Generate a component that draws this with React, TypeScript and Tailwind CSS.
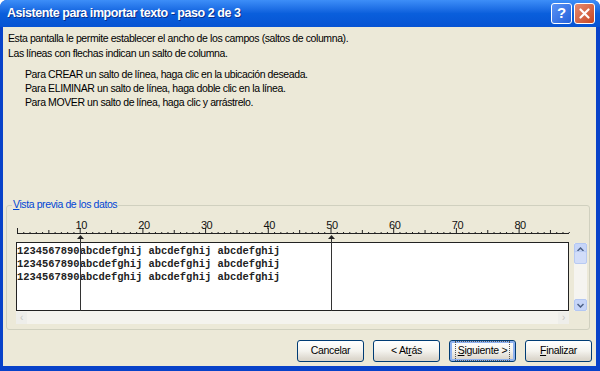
import React from "react";

const CH = 6.27;
const rows = [
  "1234567890abcdefghij abcdefghij abcdefghij",
  "1234567890abcdefghij abcdefghij abcdefghij",
  "1234567890abcdefghij abcdefghij abcdefghij",
];
const breaks = [10, 50];

const Ruler: React.FC = () => {
  const ticks = [];
  for (let n = 0; n <= 88; n++) {
    const x = 1.5 + n * CH;
    const h = n % 10 === 0 ? 5 : n % 5 === 0 ? 3 : 1;
    ticks.push(<line key={n} x1={x} x2={x} y1={15 - h} y2={15} stroke="#222" strokeWidth={1} />);
  }
  return (
    <svg width={556} height={24} className="block">
      <line x1={1} x2={553} y1={15.5} y2={15.5} stroke="#222" strokeWidth={1} />
      {ticks}
      {[10, 20, 30, 40, 50, 60, 70, 80].map((n) => (
        <text
          key={n}
          x={1.5 + n * CH + 1}
          y={11}
          textAnchor="middle"
          fontSize={11}
          fontFamily="'Liberation Sans', Arial, sans-serif"
          fill="#111"
        >
          {n}
        </text>
      ))}
    </svg>
  );
};

const XpButton: React.FC<{ children: React.ReactNode; def?: boolean }> = ({ children, def }) => (
  <div
    className={`w-[67px] h-[22px] rounded-[3px] border border-[#003c74] bg-gradient-to-b from-[#ffffff] via-[#f4f3ee] to-[#d6d0c5] flex items-center justify-center text-[10.5px] tracking-[-0.3px] text-black ${
      def ? "shadow-[inset_0_0_0_2px_#8fb2ef]" : "shadow-[inset_0_-2px_0_#dcd7cc]"
    }`}
  >
    <span className={def ? "outline outline-1 outline-dotted outline-[#555] outline-offset-1 px-[1px]" : ""}>
      {children}
    </span>
  </div>
);

const App: React.FC = () => {
  return (
    <div className="w-[600px] h-[371px] bg-white font-['Liberation_Sans',Arial,sans-serif]">
      <div className="w-[600px] h-[371px] rounded-t-[7px] bg-[#0842c9] flex flex-col overflow-hidden">
        {/* title bar */}
        <div className="h-[27px] flex items-center justify-between pl-[7px] pr-[5px] bg-gradient-to-b from-[#3d8ef8] via-[#0a5fdc] to-[#0653d3]">
          <span className="text-white font-bold text-[12.5px] tracking-[-0.45px] [text-shadow:1px_1px_0_#0a2f8a]">
            Asistente para importar texto - paso 2 de 3
          </span>
          <div className="flex gap-[2px] items-center">
            <div className="w-[21px] h-[21px] rounded-[3px] border border-white bg-gradient-to-br from-[#5b93f5] to-[#2360da] flex items-center justify-center text-white font-bold text-[15px]">
              ?
            </div>
            <div className="w-[21px] h-[21px] rounded-[3px] border border-white bg-gradient-to-br from-[#e58a70] to-[#c7461f] flex items-center justify-center">
              <svg width="11" height="11" viewBox="0 0 11 11">
                <path d="M1.5 1.5 L9.5 9.5 M9.5 1.5 L1.5 9.5" stroke="white" strokeWidth="2.2" strokeLinecap="round" />
              </svg>
            </div>
          </div>
        </div>

        {/* client area */}
        <div className="flex-1 ml-[3px] mr-[4px] mb-[5px] bg-[#ece9d8] flex flex-col text-[10.5px] tracking-[-0.4px] text-black">
          <div className="pt-[4px] pl-[5px] leading-[15px]">
            <p>Esta pantalla le permite establecer el ancho de los campos (saltos de columna).</p>
            <p>Las líneas con flechas indican un salto de columna.</p>
          </div>
          <div className="mt-[6px] pl-[22px] leading-[14px]">
            <p>Para CREAR un salto de línea, haga clic en la ubicación deseada.</p>
            <p>Para ELIMINAR un salto de línea, haga doble clic en la línea.</p>
            <p>Para MOVER un salto de línea, haga clic y arrástrelo.</p>
          </div>

          {/* group box */}
          <div className="relative mt-[96px] ml-[3px] w-[584px] h-[125px] border border-[#d0d0bf] rounded-[3px]">
            <span className="absolute -top-[8px] left-[5px] bg-[#ece9d8] px-[1px] text-[#0046d5] leading-[13px]">
              <span className="underline">V</span>ista previa de los datos
            </span>
            <div className="relative ml-[9px] mt-[12px] flex">
              <div className="flex flex-col">
                <Ruler />
                <div className="w-[553px] h-[69px] bg-white border border-[#222] pt-[2px] font-['Liberation_Mono','Courier_New',monospace] font-bold tracking-normal text-[10.45px] leading-[13px] text-[#222] whitespace-pre">
                  {rows.map((r, i) => (
                    <div key={i}>{r}</div>
                  ))}
                </div>
                <div className="w-[553px] h-[13px] bg-[#f4f3ee] flex justify-between items-center">
                  <div className="w-[11px] h-[12px] bg-[#eeeeea] text-[#c5c5c0] text-[10px] leading-[12px] text-center">‹</div>
                  <div className="w-[11px] h-[12px] bg-[#eeeeea] text-[#c5c5c0] text-[10px] leading-[12px] text-center">›</div>
                </div>
              </div>
              <div className="ml-[2px] mt-[25px] w-[13px] h-[68px] bg-[#f5f4f0] flex flex-col justify-between">
                <div className="h-[12px] rounded-[2px] bg-[#c6d5f8] border border-[#b3c7f3] flex items-center justify-center">
                  <svg width="7" height="5" viewBox="0 0 7 5">
                    <path d="M0.5 4 L3.5 1 L6.5 4" stroke="#4d6185" strokeWidth="1.5" fill="none" />
                  </svg>
                </div>
                <div className="h-[13px] -mt-[40px] rounded-[2px] bg-[#d2ddf9] border border-[#b8caf2]" />
                <div className="h-[12px] rounded-[2px] bg-[#c6d5f8] border border-[#b3c7f3] flex items-center justify-center">
                  <svg width="7" height="5" viewBox="0 0 7 5">
                    <path d="M0.5 1 L3.5 4 L6.5 1" stroke="#4d6185" strokeWidth="1.5" fill="none" />
                  </svg>
                </div>
              </div>
              {breaks.map((b) => (
                <div
                  key={b}
                  className="absolute top-[17px] h-[76px] w-[7px] flex flex-col items-center"
                  style={{ left: 1 + b * CH - 3 }}
                >
                  <svg width="7" height="4" viewBox="0 0 7 4" className="block">
                    <path d="M3.5 0 L7 4 L0 4 Z" fill="#222" />
                  </svg>
                  <div className="w-[1px] flex-1 bg-[#333]" />
                </div>
              ))}
            </div>
          </div>

          {/* buttons */}
          <div className="mt-[10px] pr-[4px] flex justify-end gap-[9px]">
            <XpButton>Cancelar</XpButton>
            <XpButton>
              &lt; At<span className="underline">r</span>ás
            </XpButton>
            <XpButton def>
              <span className="underline">S</span>iguiente &gt;
            </XpButton>
            <XpButton>
              <span className="underline">F</span>inalizar
            </XpButton>
          </div>
        </div>
      </div>
    </div>
  );
};

export default App;
